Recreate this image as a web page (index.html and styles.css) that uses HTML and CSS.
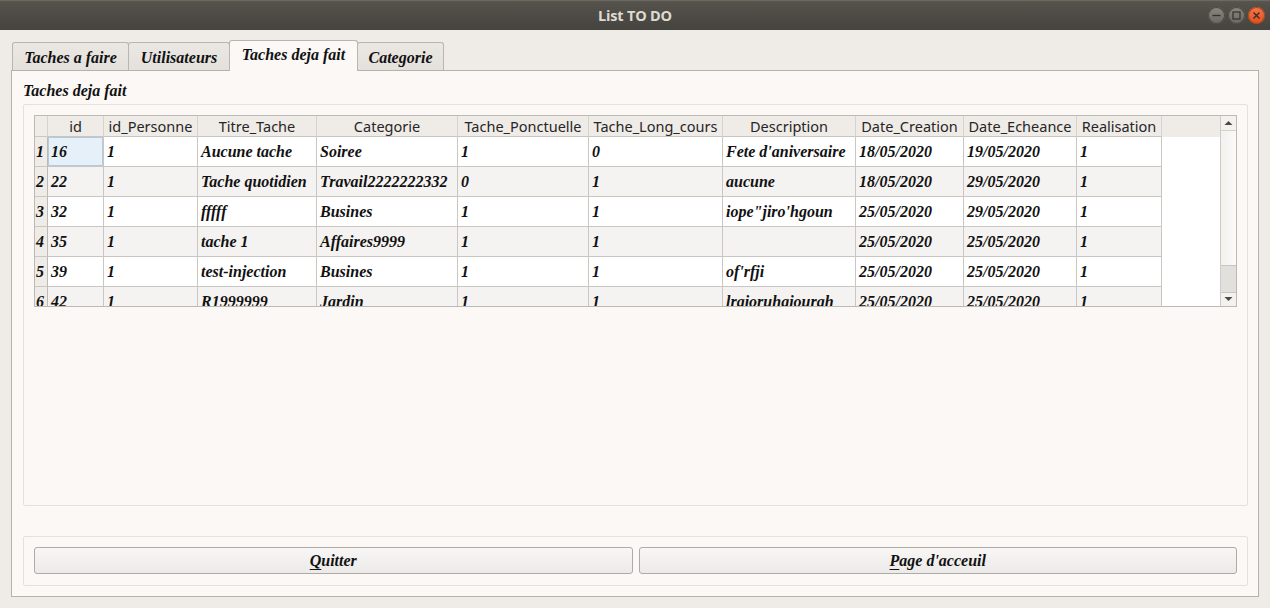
FILE: index.html
```html
<!DOCTYPE html>
<html>
<head>
<meta charset="utf-8">
<link rel="stylesheet" href="styles.css">
</head>
<body>
<div class="window">
  <div class="titlebar">
    <span class="title">List TO DO</span>
    <div class="wbtns">
      <span class="wbtn"><svg width="17" height="17" viewBox="0 0 17 17"><line x1="4.5" y1="8.5" x2="12.5" y2="8.5" stroke="#33312d" stroke-width="1.3"/></svg></span>
      <span class="wbtn"><svg width="17" height="17" viewBox="0 0 17 17"><rect x="5" y="5" width="7" height="7" fill="none" stroke="#33312d" stroke-width="1.2"/></svg></span>
      <span class="wbtn close"><svg width="17" height="17" viewBox="0 0 17 17"><path d="M5.5 5.5 L11.5 11.5 M11.5 5.5 L5.5 11.5" stroke="#3a2a22" stroke-width="1.3"/></svg></span>
    </div>
  </div>
  <div class="main">
    <div class="tabs">
      <div class="tab">Taches a faire</div>
      <div class="tab">Utilisateurs</div>
      <div class="tab active">Taches deja fait</div>
      <div class="tab">Categorie</div>
    </div>
    <div class="pane">
      <div class="pane-label">Taches deja fait</div>
      <div class="frame">
        <div class="gridbox">
          <div class="view">
            <div class="row head">
              <div class="c rh"></div>
              <div class="c w1">id</div>
              <div class="c w2">id_Personne</div>
              <div class="c w3">Titre_Tache</div>
              <div class="c w4">Categorie</div>
              <div class="c w5">Tache_Ponctuelle</div>
              <div class="c w6">Tache_Long_cours</div>
              <div class="c w7">Description</div>
              <div class="c w8">Date_Creation</div>
              <div class="c w9">Date_Echeance</div>
              <div class="c w10">Realisation</div>
            </div>
            <div class="row">
              <div class="c rh">1</div>
              <div class="c w1 sel">16</div>
              <div class="c w2">1</div>
              <div class="c w3">Aucune tache</div>
              <div class="c w4">Soiree</div>
              <div class="c w5">1</div>
              <div class="c w6">0</div>
              <div class="c w7">Fete d'aniversaire</div>
              <div class="c w8">18/05/2020</div>
              <div class="c w9">19/05/2020</div>
              <div class="c w10">1</div>
            </div>
            <div class="row alt">
              <div class="c rh">2</div>
              <div class="c w1">22</div>
              <div class="c w2">1</div>
              <div class="c w3">Tache quotidien</div>
              <div class="c w4">Travail2222222332</div>
              <div class="c w5">0</div>
              <div class="c w6">1</div>
              <div class="c w7">aucune</div>
              <div class="c w8">18/05/2020</div>
              <div class="c w9">29/05/2020</div>
              <div class="c w10">1</div>
            </div>
            <div class="row">
              <div class="c rh">3</div>
              <div class="c w1">32</div>
              <div class="c w2">1</div>
              <div class="c w3">fffff</div>
              <div class="c w4">Busines</div>
              <div class="c w5">1</div>
              <div class="c w6">1</div>
              <div class="c w7">iope"jiro'hgoun</div>
              <div class="c w8">25/05/2020</div>
              <div class="c w9">29/05/2020</div>
              <div class="c w10">1</div>
            </div>
            <div class="row alt">
              <div class="c rh">4</div>
              <div class="c w1">35</div>
              <div class="c w2">1</div>
              <div class="c w3">tache 1</div>
              <div class="c w4">Affaires9999</div>
              <div class="c w5">1</div>
              <div class="c w6">1</div>
              <div class="c w7"></div>
              <div class="c w8">25/05/2020</div>
              <div class="c w9">25/05/2020</div>
              <div class="c w10">1</div>
            </div>
            <div class="row">
              <div class="c rh">5</div>
              <div class="c w1">39</div>
              <div class="c w2">1</div>
              <div class="c w3">test-injection</div>
              <div class="c w4">Busines</div>
              <div class="c w5">1</div>
              <div class="c w6">1</div>
              <div class="c w7">of'rfji</div>
              <div class="c w8">25/05/2020</div>
              <div class="c w9">25/05/2020</div>
              <div class="c w10">1</div>
            </div>
            <div class="row alt">
              <div class="c rh">6</div>
              <div class="c w1">42</div>
              <div class="c w2">1</div>
              <div class="c w3">R1999999</div>
              <div class="c w4">Jardin</div>
              <div class="c w5">1</div>
              <div class="c w6">1</div>
              <div class="c w7">lraioruhaiourah</div>
              <div class="c w8">25/05/2020</div>
              <div class="c w9">25/05/2020</div>
              <div class="c w10">1</div>
            </div>
          </div>
          <div class="vscroll">
            <div class="sbtn up"><svg width="15" height="14" viewBox="0 0 15 14"><path d="M3.5 9 L7.5 5 L11.5 9 Z" fill="#4a4a48"/></svg></div>
            <div class="track"><div class="handle"></div></div>
            <div class="sbtn down"><svg width="15" height="13" viewBox="0 0 15 13"><path d="M3.5 4 L7.5 8 L11.5 4 Z" fill="#4a4a48"/></svg></div>
          </div>
        </div>
      </div>
      <div class="frame bottom">
        <button class="btn"><u>Q</u>uitter</button>
        <button class="btn"><u>P</u>age d'acceuil</button>
      </div>
    </div>
  </div>
</div>
</body>
</html>
```

FILE: styles.css
```css
html, body {
  margin: 0;
  padding: 0;
}
body {
  width: 1270px;
  height: 608px;
  overflow: hidden;
  background: #efebe7;
  font-family: "Liberation Serif", serif;
}
.window {
  display: flex;
  flex-direction: column;
  height: 608px;
}
.titlebar {
  height: 30px;
  flex: none;
  background: linear-gradient(#5a5751 0px, #55524c 2px, #45433e 30px);
  border-top: 1px solid #6c6963;
  box-sizing: border-box;
  display: flex;
  align-items: center;
  justify-content: center;
  position: relative;
}
.title {
  font-family: "Open Sans", "DejaVu Sans", sans-serif;
  font-weight: 700;
  font-size: 14.5px;
  color: #dfdbd2;
  letter-spacing: -0.2px;
}
.wbtns {
  position: absolute;
  right: 5px;
  top: 6px;
  display: flex;
  gap: 3px;
}
.wbtn {
  width: 17px;
  height: 17px;
  border-radius: 50%;
  background: linear-gradient(#8a8781, #6a6762);
  box-shadow: inset 0 0 0 1px #4a4843;
  display: block;
}
.wbtn svg { display: block; }
.wbtn.close {
  background: linear-gradient(#f3774a, #df4f1f);
  box-shadow: inset 0 0 0 1px #a94520;
}
.main {
  flex: 1;
  padding: 11px 11px 12px 11px;
  display: flex;
  flex-direction: column;
}
.tabs {
  height: 29px;
  display: flex;
  align-items: flex-end;
  position: relative;
  z-index: 2;
  padding-left: 1px;
}
.tab {
  height: 28px;
  box-sizing: border-box;
  border: 1px solid #b9b5b0;
  border-bottom: none;
  border-radius: 3px 3px 0 0;
  background: linear-gradient(#ebe8e4, #e4e1dd);
  font-weight: 700;
  font-style: italic;
  font-size: 16px;
  color: #111;
  display: flex;
  align-items: center;
  justify-content: center;
  white-space: nowrap;
  padding-top: 2px;
  margin-right: -1px;
  flex: none;
}
.tab:nth-child(1) { width: 117px; }
.tab:nth-child(2) { width: 102px; }
.tab:nth-child(3) { width: 129px; }
.tab:nth-child(4) { width: 87px; }
.tab.active {
  height: 31px;
  margin-bottom: -1px;
  background: #fbf8f5;
  padding-top: 0;
  padding-bottom: 3px;
  position: relative;
  z-index: 3;
}
.pane {
  flex: 1;
  border: 1px solid #b5b1ab;
  background: #fbf8f5;
  padding: 0 10px 10px 11px;
  display: flex;
  flex-direction: column;
}
.pane-label {
  font-weight: 700;
  font-style: italic;
  font-size: 16px;
  color: #111;
  height: 33px;
  line-height: 20px;
  padding-top: 10px;
  box-sizing: border-box;
}
.frame {
  border: 1px solid #e5e1dc;
  border-radius: 2px;
  padding: 10px;
  height: 402px;
  box-sizing: border-box;
}
.frame.bottom {
  margin-top: 30px;
  height: 50px;
  display: flex;
  gap: 6px;
}
.gridbox {
  height: 192px;
  border: 1px solid #bdb9b4;
  display: flex;
  box-sizing: border-box;
  background: #fff;
}
.view {
  flex: 1;
  overflow: hidden;
  background: linear-gradient(#efebe7 0, #efebe7 21px, #fff 21px);
}
.row {
  display: flex;
  height: 30px;
}
.row.head {
  height: 21px;
}
.c {
  box-sizing: border-box;
  flex: none;
  border-right: 1px solid #cac7c3;
  border-bottom: 1px solid #cac7c3;
  background: #fff;
  font-weight: 700;
  font-style: italic;
  font-size: 16px;
  color: #111;
  padding-left: 3px;
  display: flex;
  align-items: center;
  white-space: nowrap;
  overflow: hidden;
}
.row.alt .c { background: #f5f3f1; }
.head .c {
  background: #efebe7;
  font-family: "Noto Sans", "Open Sans", sans-serif;
  font-weight: 400;
  font-style: normal;
  font-size: 14.5px;
  color: #262626;
  justify-content: center;
  padding: 0;
  border-right-color: #d6d2cd;
  border-bottom-color: #c8c4bf;
}
.c.rh {
  width: 13px;
  padding-left: 1px;
  background: #efebe7 !important;
  border-right-color: #bdb9b4;
  border-bottom-color: #cac7c3;
}
.head .c.rh { border-right-color: #d6d2cd; }
.c.sel {
  background: #e6f0f8;
  box-shadow: inset 0 0 0 1px #b5cbdd;
}
.w1 { width: 56px; }
.w2 { width: 94px; }
.w3 { width: 119px; }
.w4 { width: 141px; }
.w5 { width: 131px; }
.w6 { width: 134px; }
.w7 { width: 133px; }
.w8 { width: 108px; }
.w9 { width: 113px; }
.w10 { width: 85px; }
.vscroll {
  width: 15px;
  border-left: 1px solid #cfcbc6;
  display: flex;
  flex-direction: column;
  background: linear-gradient(90deg, #f3f1ee, #fbfaf8);
}
.sbtn {
  flex: none;
  height: 14px;
  background: #f4f2ef;
}
.sbtn svg { display: block; }
.sbtn.up { border-bottom: 1px solid #d4d0cb; }
.sbtn.down { height: 13px; border-top: 1px solid #c8c4bf; }
.track {
  flex: 1;
  display: flex;
  flex-direction: column;
  justify-content: flex-end;
}
.handle {
  height: 26px;
  background: #e2e0dc;
  border-top: 1px solid #c8c4bf;
}
.btn {
  flex: 1;
  height: 27px;
  border: 1px solid #aeaaa5;
  border-radius: 3px;
  background: linear-gradient(#f8f7f6, #eceae8);
  font-family: "Liberation Serif", serif;
  font-weight: 700;
  font-style: italic;
  font-size: 16px;
  color: #111;
  padding: 0;
  margin: 0;
}
.btn u {
  text-decoration-thickness: 1px;
  text-underline-offset: 3px;
}
```
